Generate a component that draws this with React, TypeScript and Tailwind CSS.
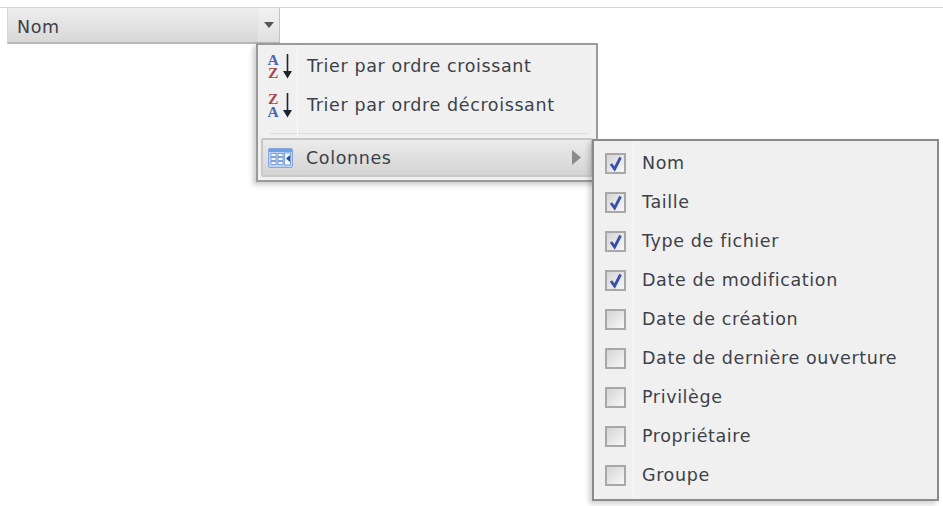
import React from "react";

const AZ = ({ flip }: { flip?: boolean }) => (
  <svg width="26" height="27" viewBox="0 0 26 27" className="shrink-0 overflow-visible">
    <text x="6.5" y="12" textAnchor="middle" fontFamily="'Liberation Serif', serif" fontWeight="700" fontSize="15.5" fill={flip ? "#a8484c" : "#4a68b0"}>{flip ? "Z" : "A"}</text>
    <text x="6.5" y="25" textAnchor="middle" fontFamily="'Liberation Serif', serif" fontWeight="700" fontSize="15.5" fill={flip ? "#4a68b0" : "#a8484c"}>{flip ? "A" : "Z"}</text>
    <path d="M20.5 1v19" stroke="#1c2430" strokeWidth="1.6" />
    <path d="M16 18h9l-4.5 7.5z" fill="#1c2430" />
  </svg>
);

const ColumnsIcon = () => (
  <svg width="25" height="20" viewBox="0 0 25 20" className="shrink-0">
    <rect x="0.5" y="0.5" width="24" height="19" rx="1.5" fill="#bcd3f3" stroke="#86a8da" />
    <rect x="1" y="1" width="23" height="3" fill="#6f9fe4" />
    <g fill="#f4f8fe" stroke="#6a94cf" strokeWidth="0.8">
      <rect x="3" y="5.5" width="5" height="3" /><rect x="3" y="9.5" width="5" height="3" /><rect x="3" y="13.5" width="5" height="3" />
      <rect x="10" y="5.5" width="5" height="3" /><rect x="10" y="9.5" width="5" height="3" /><rect x="10" y="13.5" width="5" height="3" />
    </g>
    <rect x="16.5" y="5" width="6" height="12" fill="#f4f8fe" stroke="#6a94cf" strokeWidth="0.8" />
    <path d="M22 7v7l-4-3.5z" fill="#2b4f8f" />
  </svg>
);

const Check = ({ on }: { on: boolean }) => (
  <span className="w-[21px] h-[21px] shrink-0 border-2 border-[#a8a8a8] bg-gradient-to-br from-[#d4d4d6] to-[#f8f8f8] flex items-center justify-center">
    {on && (
      <svg width="17" height="17" viewBox="0 0 17 17">
        <path d="M4 9l3.6 5L13.5 2.5" fill="none" stroke="#3a4fa8" strokeWidth="2.8" />
      </svg>
    )}
  </span>
);

const cols: [string, boolean][] = [
  ["Nom", true],
  ["Taille", true],
  ["Type de fichier", true],
  ["Date de modification", true],
  ["Date de création", false],
  ["Date de dernière ouverture", false],
  ["Privilège", false],
  ["Propriétaire", false],
  ["Groupe", false],
];

export default function App() {
  return (
    <div className="relative w-[943px] h-[506px] bg-white overflow-hidden font-['DejaVu_Sans',sans-serif] text-[17.5px] tracking-[0.62px] text-[#3d4148]">
      <div className="pt-[7px]">
        <div className="border-t border-[#d4d4d4]">
          <div className="flex w-[273px] h-[36px] ml-[7px] border-b-2 border-l border-[#b8b8b8] border-l-[#d8d8d8] bg-gradient-to-b from-[#eeeeee] to-[#d8d8d8]">
            <div className="flex-1 flex items-center pl-[9px] pt-[4px]">Nom</div>
            <div className="w-[22px] flex items-center justify-center border-x border-l-[#e8e8e8] border-r-[#c4c4c4] bg-gradient-to-b from-[#f2f2f2] to-[#e0e0e0]">
              <svg width="10" height="6" viewBox="0 0 10 6"><path d="M0 0h10L5 6z" fill="#555" /></svg>
            </div>
          </div>
        </div>
      </div>

      <div className="absolute left-[256px] top-[43px] w-[342px] h-[139px] border-2 border-[#9a9a9a] bg-[#f0f0f0] shadow-[-3px_3px_5px_rgba(0,0,0,0.2)] flex flex-col">
        <div className="absolute left-[39px] top-0 bottom-0 w-px bg-[#fafafa]" />
        <div className="h-[39px] mt-[2px] flex items-center pl-[9px] gap-[14px]"><AZ /><span>Trier par ordre croissant</span></div>
        <div className="h-[39px] flex items-center pl-[9px] gap-[14px]"><AZ flip /><span>Trier par ordre décroissant</span></div>
        <div className="h-px bg-[#dcdcdc] ml-[12px] mr-[8px] mt-[8px]" />
        <div className="relative mx-[3px] mt-[4px] h-[39px] rounded-[2px] border-2 border-[#c8c8c8] bg-gradient-to-b from-[#ebebeb] to-[#d4d4d4] flex items-center pl-[5px] gap-[13px]">
          <ColumnsIcon />
          <span className="pt-[2px]">Colonnes</span>
          <svg className="absolute right-[10px] top-[10px]" width="9" height="15" viewBox="0 0 9 15"><path d="M0 0l9 7.5L0 15z" fill="#8a8a8a" /></svg>
        </div>
      </div>

      <div className="absolute left-[592px] top-[139px] w-[347px] h-[362px] border-2 border-[#8a8a8a] bg-[#f0f0f0] shadow-[-3px_3px_5px_rgba(0,0,0,0.18)] flex flex-col pt-[3px]">
        <div className="absolute left-[39px] top-0 bottom-0 w-px bg-[#fafafa]" />
        {cols.map(([label, on]) => (
          <div key={label} className="h-[39px] flex items-center pl-[11px] gap-[16px]">
            <Check on={on} />
            <span>{label}</span>
          </div>
        ))}
      </div>
    </div>
  );
}
